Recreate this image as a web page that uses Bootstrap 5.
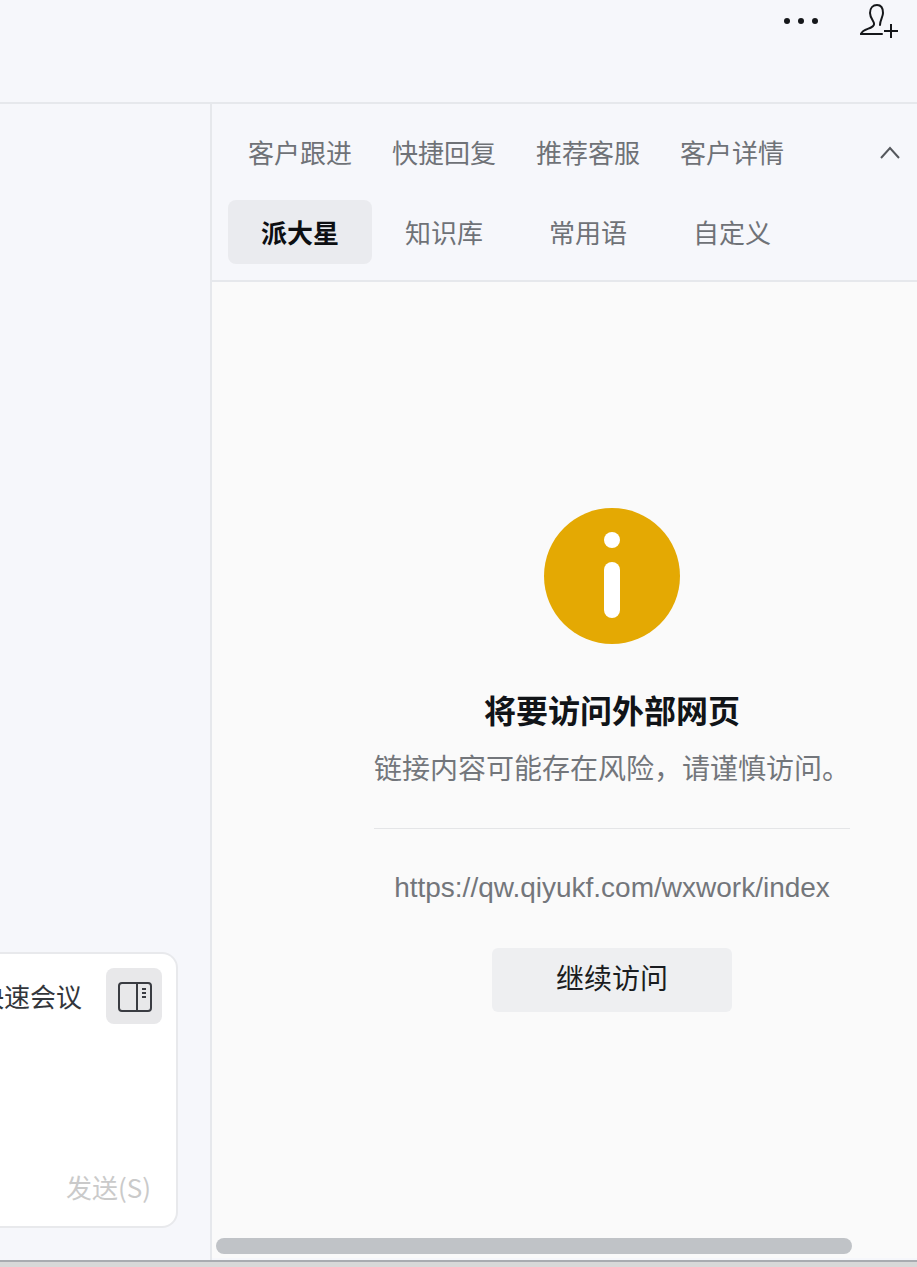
<!DOCTYPE html>
<html lang="zh-CN">
<head>
<meta charset="utf-8">
<title>客户详情</title>
<link href="https://cdn.jsdelivr.net/npm/bootstrap@5.3.0/dist/css/bootstrap.min.css" rel="stylesheet">
<style>
html,body{height:100%;margin:0;overflow:hidden}
body{background:#d8d8d8;font-family:"Liberation Sans","Noto Sans CJK SC",sans-serif;color:#111418}
.app-shell{height:1262px;background:#f6f7fb;border-bottom:2px solid #a9abb0;overflow:hidden}
.top-strip{height:104px;border-bottom:2px solid #e6e8ec;padding:0 17px 0 0}
.top-tools{height:42px;gap:40px}
.dots-btn{width:36px;height:6px}
.main-area{height:1156px}
.chat-col{width:210px;overflow:hidden;padding-right:32px;padding-bottom:32px}
.composer{height:276px;width:100%;background:#fff;border:2px solid #e8e9ec;border-left:0;border-radius:0 16px 16px 0;padding:14px 14px 21px 0}
.composer-tools{font-size:26px;line-height:60px;color:#33363b;white-space:nowrap}
.composer-tools span{margin-left:-60px}
.panel-toggle{width:56px;height:56px;background:#e8e8ea;border-radius:8px;margin-left:24px}
.send-text{font-family:"Noto Sans CJK SC",sans-serif;font-size:26px;line-height:36px;color:#cacaca;padding-right:11px}
.side-col{width:707px;border-left:2px solid #e6e8ec}
.side-head{height:178px;border-bottom:2px solid #e6e8ec;padding:16px 0 0 16px}
.tab-row{height:64px;font-size:26px;line-height:68px;text-align:center;color:#6f7277}
.tab-cell{width:144px}
.sub-row{margin-top:16px}
.tab-on{background:#eaebef;border-radius:8px;color:#0d0f12;font-weight:700}
.collapse-mark{margin-left:62px;width:48px;padding-top:26px}
.notice-pane{height:976px;background:#fafafa;padding-top:226px}
.notice-body{width:476px;margin-left:162px;text-align:center}
.notice-title{font-size:32px;line-height:44px;font-weight:700;color:#111418;margin:46px 0 0}
.notice-sub{font-size:28px;line-height:44px;color:#73767b;margin:14px 0 0;white-space:nowrap}
.notice-rule{height:1px;background:#e4e5e7;margin-top:36px}
.notice-url{font-size:28px;line-height:40px;color:#73767b;margin:39px 0 0;white-space:nowrap}
.go-btn{width:240px;height:64px;background:#eeeff1;border:0;border-radius:6px;font-size:28px;line-height:64px;padding:0;color:#1a1c20;margin-top:40px}
.go-btn:hover{background:#e6e7ea}
.fake-scroll{height:16px;width:636px;background:#c0c3c7;border-radius:8px;margin:226px 0 0 4px}
</style>
</head>
<body>
<div class="app-shell">
  <div class="top-strip d-flex justify-content-end">
    <div class="top-tools d-flex align-items-center">
      <svg class="dots-btn" viewBox="0 0 36 6" aria-label="更多"><g fill="#15171a"><circle cx="3" cy="3" r="3"/><circle cx="17" cy="3" r="3"/><circle cx="31" cy="3" r="3"/></g></svg>
      <svg width="40" height="36" viewBox="0 0 40 36" fill="none" stroke="#15171a" stroke-width="2" stroke-linecap="round" aria-label="添加成员"><path d="M1 31C2 27 8 26 11 24.500C14 23 15 21 13 18C11 15 10 13 10 10C10 5 13 2 17 2C21 2 23 5 23 10C23 14 20 17 20 22"/><path d="M1 31H22"/><path stroke-linecap="butt" d="M24 28H38M31 21V35"/></svg>
    </div>
  </div>
  <div class="main-area d-flex">
    <div class="chat-col d-flex align-items-end">
      <div class="composer d-flex flex-column justify-content-between">
        <div class="composer-tools d-flex justify-content-end align-items-start">
          <span>快速会议</span>
          <div class="panel-toggle d-flex align-items-center justify-content-center flex-shrink-0">
            <svg width="36" height="32" viewBox="0 0 36 32" fill="none" stroke="#3a3c42" stroke-width="2"><rect x="3" y="3" width="32" height="28" rx="3"/><path d="M21 3V31"/><path d="M26 9H30M26 13H30M26 17H30"/></svg>
          </div>
        </div>
        <div class="send-text text-end">发送(S)</div>
      </div>
    </div>
    <div class="side-col">
      <div class="side-head">
        <div class="tab-row d-flex">
          <div class="tab-cell">客户跟进</div>
          <div class="tab-cell">快捷回复</div>
          <div class="tab-cell">推荐客服</div>
          <div class="tab-cell">客户详情</div>
          <div class="collapse-mark d-flex justify-content-center align-items-start">
            <svg width="22" height="13" viewBox="0 0 22 13" fill="none" stroke="#55585d" stroke-width="2"><path d="M2 12L11 2L20 12"/></svg>
          </div>
        </div>
        <div class="tab-row sub-row d-flex">
          <div class="tab-cell tab-on">派大星</div>
          <div class="tab-cell">知识库</div>
          <div class="tab-cell">常用语</div>
          <div class="tab-cell">自定义</div>
        </div>
      </div>
      <div class="notice-pane">
        <div class="notice-body">
          <svg class="d-block mx-auto" width="136" height="136" viewBox="0 0 136 136"><circle cx="68" cy="68" r="68" fill="#e4a903"/><circle cx="68" cy="32" r="8" fill="#fff"/><rect x="60" y="54" width="16" height="56" rx="8" fill="#fff"/></svg>
          <h1 class="notice-title">将要访问外部网页</h1>
          <p class="notice-sub">链接内容可能存在风险，请谨慎访问。</p>
          <div class="notice-rule"></div>
          <p class="notice-url">https://qw.qiyukf.com/wxwork/index</p>
          <button type="button" class="btn go-btn">继续访问</button>
        </div>
        <div class="fake-scroll"></div>
      </div>
    </div>
  </div>
</div>
<script src="https://cdn.jsdelivr.net/npm/bootstrap@5.3.0/dist/js/bootstrap.bundle.min.js"></script>
</body>
</html>
